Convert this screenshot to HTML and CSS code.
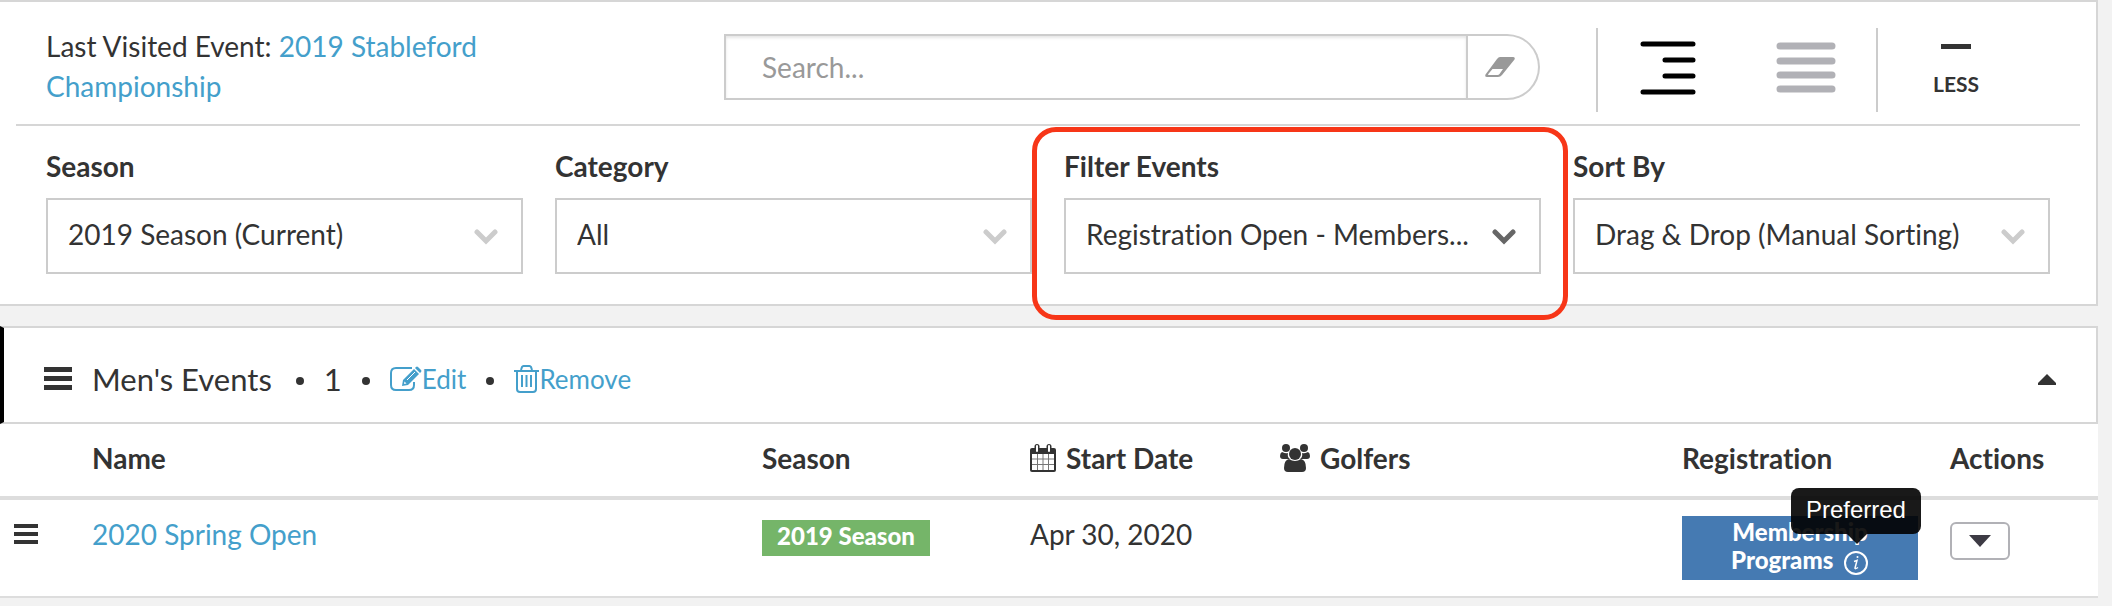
FILE: index.html
```html
<!DOCTYPE html>
<html lang="en">
<head>
    <meta charset="UTF-8">
    <meta name="viewport" content="width=device-width, initial-scale=1.0">
    <title>Events</title>
    <link rel="stylesheet" href="styles.css">
</head>
<body>
    <section class="filters-panel">
        <div class="toolbar">
            <p class="last-visited">Last Visited Event: <a href="#">2019 Stableford Championship</a></p>
            <form class="search">
                <input type="text" class="search-input" placeholder="Search..." aria-label="Search">
                <button type="button" class="search-clear" aria-label="Clear search">
                    <svg width="32" height="22" viewBox="0 0 32 22">
                        <path d="M16 1H29Q31.500 1 30.500 3.500L18 19Q16.500 21 14 21H3Q.5 21 1.500 18.500L13 3Q14.500 1 16 1Z" fill="#999"/>
                        <path d="M8.500 13H19L15.500 18Q14.800 19 13.500 19H4.500Q3.700 19 4.300 18Z" fill="#fff"/>
                    </svg>
                </button>
            </form>
            <div class="view-buttons">
                <button type="button" aria-label="Grouped view">
                    <svg width="56" height="54" viewBox="0 0 56 54" stroke="#000" stroke-width="5" stroke-linecap="round">
                        <path d="M3 3H53M25 19H53M25 35H53M3 51H53"/>
                    </svg>
                </button>
                <button type="button" aria-label="List view">
                    <svg width="60" height="54" viewBox="0 0 60 54" stroke="#b1b1b6" stroke-width="7" stroke-linecap="round">
                        <path d="M4 5H56M4 20H56M4 34H56M4 48H56"/>
                    </svg>
                </button>
            </div>
            <button type="button" class="less-button">
                <span class="dash"></span>
                LESS
            </button>
        </div>

        <div class="filters">
            <div class="field">
                <label for="season">Season</label>
                <div class="select-box">
                    <select id="season"><option>2019 Season (Current)</option></select>
                    <svg class="chevron" width="24" height="16" viewBox="0 0 24 16"><path d="M3 3L12 12L21 3"/></svg>
                </div>
            </div>
            <div class="field">
                <label for="category">Category</label>
                <div class="select-box">
                    <select id="category"><option>All</option></select>
                    <svg class="chevron" width="24" height="16" viewBox="0 0 24 16"><path d="M3 3L12 12L21 3"/></svg>
                </div>
            </div>
            <div class="field highlighted">
                <label for="filter">Filter Events</label>
                <div class="select-box">
                    <select id="filter"><option>Registration Open - Members...</option></select>
                    <svg class="chevron" width="24" height="16" viewBox="0 0 24 16"><path d="M3 3L12 12L21 3"/></svg>
                </div>
            </div>
            <div class="field">
                <label for="sort">Sort By</label>
                <div class="select-box">
                    <select id="sort"><option>Drag &amp; Drop (Manual Sorting)</option></select>
                    <svg class="chevron" width="24" height="16" viewBox="0 0 24 16"><path d="M3 3L12 12L21 3"/></svg>
                </div>
            </div>
        </div>
    </section>

    <section class="events">
        <div class="group-header">
            <svg class="group-handle" width="28" height="24" viewBox="0 0 28 24" fill="#333">
                <path d="M0 0H28V5H0ZM0 9H28V14H0ZM0 18H28V23H0Z"/>
            </svg>
            <h2>Men's Events</h2>
            <span class="dot"></span>
            <span class="count">1</span>
            <span class="dot"></span>
            <a href="#" class="group-link">
                <svg width="32" height="26" viewBox="0 0 32 26" fill="none" stroke="#449fcb" stroke-width="2">
                    <path d="M22 2H6Q1 2 1 7V19Q1 24 6 24H19Q24 24 24 19V16"/>
                    <path d="M12 20L13 14L24 3L29 8L18 19Z" fill="#449fcb" stroke="none"/>
                    <path d="M25 2L26 1Q27 0 28 1L31 4Q32 5 31 6L30 7Z" fill="#449fcb" stroke="none"/>
                    <path d="M14 18L14.500 15.500L16.500 17.500Z" fill="#fff" stroke="none"/>
                    <path d="M17 14L25 6" stroke="#fff" stroke-width="1"/>
                </svg>Edit</a>
            <span class="dot"></span>
            <a href="#" class="group-link">
                <svg width="25" height="28" viewBox="0 0 25 28" fill="none" stroke="#449fcb" stroke-width="2">
                    <path d="M0 6H25M7 5L8 2Q8.500 1 9.500 1H15.500Q16.500 1 17 2L18 5M3 6V24Q3 27 6 27H19Q22 27 22 24V6"/>
                    <path d="M8 10V22M12.500 10V22M17 10V22"/>
                </svg>Remove</a>
            <button type="button" class="collapse" aria-label="Collapse group">
                <svg width="18" height="11" viewBox="0 0 18 11"><path d="M9 0L18 9V11H0V9Z" fill="#333"/></svg>
            </button>
        </div>

        <table class="events-table">
            <thead>
                <tr>
                    <th class="col-handle"></th>
                    <th>Name</th>
                    <th class="col-season">Season</th>
                    <th class="col-date">
                        <span class="th-icon">
                            <svg width="26" height="28" viewBox="0 0 26 28">
                                <rect y="4" width="26" height="24" rx="2" fill="#333"/>
                                <path d="M2 10H24V26H2Z" fill="#fff"/>
                                <path d="M7.500 10V26M13 10V26M18.500 10V26M2 15H24M2 20.500H24" stroke="#777" stroke-width="1"/>
                                <rect x="4.500" y="0" width="5" height="9" rx="2.500" fill="#333"/>
                                <rect x="16.500" y="0" width="5" height="9" rx="2.500" fill="#333"/>
                                <path d="M7 2V7M19 2V7" stroke="#fff" stroke-width="2" stroke-linecap="round"/>
                            </svg>
                            Start Date
                        </span>
                    </th>
                    <th class="col-golfers">
                        <span class="th-icon">
                            <svg width="30" height="28" viewBox="0 0 30 28" fill="#333">
                                <circle cx="6" cy="4" r="4"/>
                                <circle cx="24" cy="4" r="4"/>
                                <path d="M2 8Q6 10 8 9Q7 13 10 15H3Q0 15 0 12Q0 9 2 8ZM28 8Q24 10 22 9Q23 13 20 15H27Q30 15 30 12Q30 9 28 8Z"/>
                                <circle cx="15" cy="10" r="6"/>
                                <path d="M9 15Q15 19 21 15Q26 16 26 24Q26 28 22 28H8Q4 28 4 24Q4 16 9 15Z"/>
                            </svg>
                            Golfers
                        </span>
                    </th>
                    <th class="col-registration">Registration</th>
                    <th class="col-actions">Actions</th>
                </tr>
            </thead>
            <tbody>
                <tr>
                    <td class="handle-cell">
                        <svg width="24" height="20" viewBox="0 0 24 20" fill="#333">
                            <path d="M0 0H24V4H0ZM0 8H24V12H0ZM0 16H24V20H0Z"/>
                        </svg>
                    </td>
                    <td><a href="#">2020 Spring Open</a></td>
                    <td><span class="season-label">2019 Season</span></td>
                    <td>Apr 30, 2020</td>
                    <td></td>
                    <td>
                        <div class="registration-label">
                            Membership<br>Programs
                            <span class="info">
                                <svg width="26" height="26" viewBox="0 0 26 26" fill="none" stroke="#fff">
                                    <circle cx="13" cy="13" r="11" stroke-width="2"/>
                                    <path d="M11 11.500L14 10.500L12 18Q12 19.500 15 17.500" stroke-width="1.500"/>
                                    <circle cx="14.500" cy="7" r="1" fill="#fff" stroke="none"/>
                                </svg>
                                <span class="tooltip" role="tooltip">Preferred</span>
                            </span>
                        </div>
                    </td>
                    <td>
                        <button type="button" class="action-button" aria-label="Actions">
                            <svg width="22" height="12" viewBox="0 0 22 12"><path d="M0 0H22L11 12Z" fill="#3d3b44"/></svg>
                        </button>
                    </td>
                </tr>
            </tbody>
        </table>
    </section>
</body>
</html>
```
FILE: styles.css
```css
* {
    box-sizing: border-box;
}
body {
    margin: 0;
    padding-right: 14px;
    background-color: #f2f2f2;
    color: #333;
    font-family: Lato, sans-serif;
    font-size: 28px;
    font-variant-ligatures: none;
    line-height: 40px;
}
a {
    color: #449fcb;
    text-decoration: none;
}
button {
    background: none;
    border: none;
    padding: 0;
    color: inherit;
    font-family: inherit;
    cursor: pointer;
}
svg {
    display: block;
}

/* search and filters */
.filters-panel {
    background-color: white;
    border: 2px solid #d6d6d6;
    border-left: none;
    margin-bottom: 20px;
    padding: 0 16px 30px;
}
.toolbar {
    display: flex;
    align-items: flex-start;
    padding: 24px 46px 12px 30px;
    border-bottom: 2px solid #d6d6d6;
}
.last-visited {
    flex: 0 1 678px;
    margin: 0;
    padding-right: 220px;
}
.search {
    flex: 1;
    display: flex;
    height: 66px;
    margin: 8px 56px 0 0;
}
.search-input {
    flex: 1;
    min-width: 0;
    padding: 0 36px;
    border: 2px solid #ccc;
    border-radius: 0;
    box-shadow: inset 0 2px 3px rgba(0, 0, 0, 0.1);
    color: #333;
    font-family: inherit;
    font-size: 28px;
}
.search-input::placeholder {
    color: #999;
}
.search-clear {
    width: 72px;
    border: 2px solid #ccc;
    border-left: none;
    border-radius: 0 33px 33px 0;
    padding-left: 16px;
}
.view-buttons {
    display: flex;
    justify-content: space-between;
    align-items: flex-start;
    height: 84px;
    width: 282px;
    margin-top: 2px;
    padding: 13px 40px 0 42px;
    border-left: 2px solid #ccc;
    border-right: 2px solid #ccc;
}
.less-button {
    display: flex;
    flex-direction: column;
    align-items: center;
    width: 156px;
    padding-top: 18px;
    font-size: 21px;
    font-weight: bold;
    line-height: 24px;
}
.dash {
    width: 30px;
    height: 5px;
    margin-bottom: 23px;
    background-color: #333;
}
.filters {
    display: grid;
    grid-template-columns: repeat(4, 1fr);
    gap: 32px;
    padding: 20px 30px 0;
}
.field {
    position: relative;
}
.field label {
    display: block;
    margin-bottom: 12px;
    font-weight: bold;
}
.select-box {
    position: relative;
}
.select-box select {
    display: block;
    width: 100%;
    height: 76px;
    padding: 0 64px 4px 20px;
    appearance: none;
    background-color: white;
    border: 2px solid #ccc;
    border-radius: 0;
    color: #333;
    font-family: inherit;
    font-size: 28px;
    font-variant-ligatures: none;
}
.chevron {
    position: absolute;
    top: 31px;
    right: 25px;
    fill: none;
    stroke: #ccc;
    stroke-width: 5;
    stroke-linecap: round;
    pointer-events: none;
}
.highlighted .chevron {
    stroke: #666;
}
.highlighted::after {
    content: "";
    position: absolute;
    top: -19px;
    bottom: -46px;
    left: -32px;
    right: -27px;
    border: 5px solid #f73618;
    border-radius: 24px;
    pointer-events: none;
}

/* events group */
.events {
    background-color: white;
    border-bottom: 2px solid #ddd;
}
.group-header {
    display: flex;
    align-items: center;
    height: 98px;
    padding: 8px 40px 0;
    border: 2px solid #d6d6d6;
    border-left: 4px solid #000;
}
.group-handle {
    margin-right: 20px;
}
.group-header h2 {
    margin: 0 4px 0 0;
    font-size: 31px;
    font-weight: normal;
}
.count {
    font-size: 31px;
}
.dot {
    width: 8px;
    height: 8px;
    margin: 4px 20px 0;
    border-radius: 50%;
    background-color: #333;
}
.group-link {
    display: flex;
    align-items: center;
    font-size: 26px;
}
.collapse {
    margin-left: auto;
}
.events-table {
    width: 100%;
    border-spacing: 0;
    table-layout: fixed;
}
.events-table th {
    height: 76px;
    padding: 0 16px 4px;
    border-bottom: 4px solid #ddd;
    text-align: left;
    white-space: nowrap;
}
.events-table td {
    height: 96px;
    padding: 14px 16px 0;
    vertical-align: top;
}
.events-table .handle-cell {
    padding: 24px 14px 0;
}
.col-handle {
    width: 76px;
}
.col-season,
.col-registration {
    width: 268px;
}
.col-date {
    width: 250px;
}
.col-golfers {
    width: 402px;
}
.col-actions {
    width: 164px;
}
.th-icon {
    display: flex;
    align-items: center;
    gap: 10px;
}
.season-label {
    display: block;
    width: 168px;
    height: 36px;
    margin-top: 6px;
    background-color: #75b569;
    color: white;
    font-size: 24px;
    font-weight: 900;
    line-height: 32px;
    text-align: center;
}
.registration-label {
    height: 64px;
    margin-top: 2px;
    padding-top: 2px;
    background-color: #457ab2;
    color: white;
    font-size: 24px;
    font-weight: 900;
    line-height: 28px;
    text-align: center;
}
.info {
    display: inline-block;
    position: relative;
    margin-left: 4px;
    vertical-align: middle;
}
.tooltip {
    position: absolute;
    bottom: 42px;
    left: -52px;
    width: 130px;
    height: 46px;
    border-radius: 8px;
    background-color: rgba(0, 0, 0, 0.9);
    font-family: "Liberation Sans", sans-serif;
    font-size: 24px;
    font-weight: normal;
    line-height: 44px;
}
.tooltip::after {
    content: "";
    position: absolute;
    top: 46px;
    left: 56px;
    border: 10px solid transparent;
    border-top-color: rgba(0, 0, 0, 0.9);
    border-bottom: none;
}
.action-button {
    display: flex;
    align-items: center;
    justify-content: center;
    width: 60px;
    height: 38px;
    margin-top: 8px;
    border: 2px solid #b1b1b6;
    border-radius: 6px;
}
```
